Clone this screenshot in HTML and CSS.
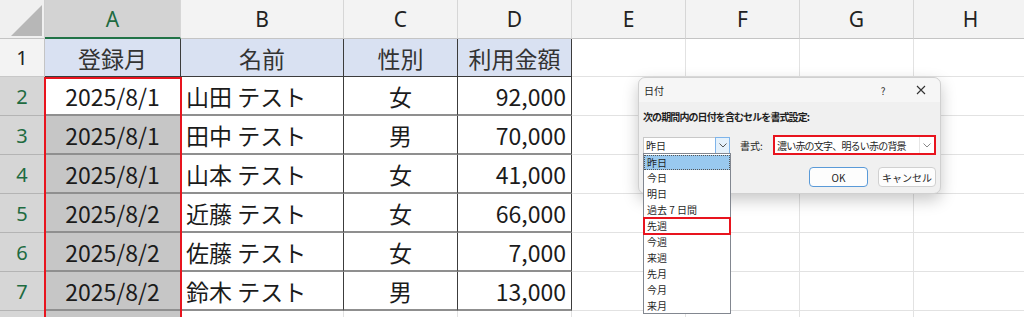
FILE: index.html
```html
<!DOCTYPE html>
<html lang="ja">
<head>
    <meta charset="UTF-8">
    <title>条件付き書式 - 日付</title>
    <link rel="stylesheet" href="styles.css">
</head>
<body>
    <div class="sheet">
        <div class="corner">
            <svg width="44" height="39" viewBox="0 0 44 39"><polygon points="11,36 42,36 42,5" fill="#b7b7b7"/></svg>
        </div>
        <div class="col sel">A</div>
        <div class="col">B</div>
        <div class="col">C</div>
        <div class="col">D</div>
        <div class="col">E</div>
        <div class="col">F</div>
        <div class="col">G</div>
        <div class="col">H</div>

        <div class="rh">1</div>
        <div class="c t th">登録月</div>
        <div class="c t th">名前</div>
        <div class="c t th">性別</div>
        <div class="c t th">利用金額</div>
        <div class="c"></div><div class="c"></div><div class="c"></div><div class="c"></div>

        <div class="rh sel">2</div>
        <div class="c t mid">2025/8/1</div>
        <div class="c t name">山田 テスト</div>
        <div class="c t mid">女</div>
        <div class="c t num">92,000</div>
        <div class="c"></div><div class="c"></div><div class="c"></div><div class="c"></div>

        <div class="rh sel">3</div>
        <div class="c t mid picked">2025/8/1</div>
        <div class="c t name">田中 テスト</div>
        <div class="c t mid">男</div>
        <div class="c t num">70,000</div>
        <div class="c"></div><div class="c"></div><div class="c"></div><div class="c"></div>

        <div class="rh sel">4</div>
        <div class="c t mid picked">2025/8/1</div>
        <div class="c t name">山本 テスト</div>
        <div class="c t mid">女</div>
        <div class="c t num">41,000</div>
        <div class="c"></div><div class="c"></div><div class="c"></div><div class="c"></div>

        <div class="rh sel">5</div>
        <div class="c t mid picked">2025/8/2</div>
        <div class="c t name">近藤 テスト</div>
        <div class="c t mid">女</div>
        <div class="c t num">66,000</div>
        <div class="c"></div><div class="c"></div><div class="c"></div><div class="c"></div>

        <div class="rh sel">6</div>
        <div class="c t mid picked">2025/8/2</div>
        <div class="c t name">佐藤 テスト</div>
        <div class="c t mid">女</div>
        <div class="c t num">7,000</div>
        <div class="c"></div><div class="c"></div><div class="c"></div><div class="c"></div>

        <div class="rh sel">7</div>
        <div class="c t mid picked">2025/8/2</div>
        <div class="c t name">鈴木 テスト</div>
        <div class="c t mid">男</div>
        <div class="c t num">13,000</div>
        <div class="c"></div><div class="c"></div><div class="c"></div><div class="c"></div>

        <div class="rh sel"></div>
        <div class="c picked"></div>
        <div class="c"></div><div class="c"></div><div class="c"></div>
        <div class="c"></div><div class="c"></div><div class="c"></div><div class="c"></div>

        <div class="mark-col"></div>

        <div class="dialog">
            <div class="titlebar">
                <span class="title">日付</span>
                <span class="help">?</span>
                <svg class="close" width="10" height="10" viewBox="0 0 10 10"><path d="M1 1L9 9M9 1L1 9" stroke="#333" stroke-width="1.1"/></svg>
            </div>
            <div class="dlg-body">
                <div class="prompt">次の期間内の日付を含むセルを書式設定:</div>
                <div class="controls">
                    <div class="combo">
                        <span class="combo-text">昨日</span>
                        <span class="combo-btn">
                            <svg width="8" height="5" viewBox="0 0 8 5"><path d="M0.5 0.5L4 4L7.5 0.5" fill="none" stroke="#555" stroke-width="1"/></svg>
                        </span>
                        <ul class="droplist">
                            <li class="current">昨日</li>
                            <li>今日</li>
                            <li>明日</li>
                            <li>過去 7 日間</li>
                            <li class="marked">先週</li>
                            <li>今週</li>
                            <li>来週</li>
                            <li>先月</li>
                            <li>今月</li>
                            <li>来月</li>
                        </ul>
                    </div>
                    <span class="fmt-label">書式:</span>
                    <div class="fmt-combo">
                        <span class="fmt-text">濃い赤の文字、明るい赤の背景</span>
                        <span class="fmt-btn">
                            <svg width="8" height="5" viewBox="0 0 8 5"><path d="M0.5 0.5L4 4L7.5 0.5" fill="none" stroke="#888" stroke-width="1"/></svg>
                        </span>
                    </div>
                </div>
                <div class="buttons">
                    <button class="btn primary">OK</button>
                    <button class="btn">キャンセル</button>
                </div>
            </div>
        </div>
    </div>
</body>
</html>
```

FILE: styles.css
```css
*{
    box-sizing: border-box;
}
body{
    margin: 0;
    background-color: #fff;
    font-family: "Noto Sans CJK JP", "Noto Sans", sans-serif;
    color: #1b1b1b;
    overflow: hidden;
}
div.sheet{
    position: relative;
    display: grid;
    grid-template-columns: 45px 136px 163px 114px 114px 114px 114px 114px 114px;
    grid-template-rows: 39px 38px repeat(7, 39px);
    width: 1024px;
    height: 317px;
    overflow: hidden;
}
div.corner{
    background-color: #f0f0f0;
    border-right: 1px solid #cfcfcf;
    border-bottom: 1px solid #c4c4c4;
}
div.corner svg{
    display: block;
}
div.col{
    display: flex;
    justify-content: center;
    align-items: center;
    background-color: #f3f3f3;
    border-right: 1px solid #d6d6d6;
    border-bottom: 1px solid #c4c4c4;
    font-family: "Noto Sans", sans-serif;
    font-size: 21px;
    color: #222;
}
div.col.sel{
    background-color: #d3d3d3;
    color: #1e6b41;
    border-bottom: 2px solid #217346;
}
div.rh{
    display: flex;
    justify-content: center;
    align-items: center;
    background-color: #f3f3f3;
    border-right: 1px solid #c4c4c4;
    border-bottom: 1px solid #c8c8c8;
    font-family: "Noto Sans", sans-serif;
    font-size: 20px;
    color: #222;
}
div.rh.sel{
    background-color: #d6d6d6;
    color: #1e6b41;
    border-bottom: 1px solid #b4b4b4;
}
div.c{
    display: flex;
    align-items: center;
    padding: 0 5px;
    font-size: 23px;
    white-space: nowrap;
    border-right: 1px solid #e2e2e2;
    border-bottom: 1px solid #e2e2e2;
}
div.c.t{
    border-right: 1px solid #3c3c3c;
    border-bottom: 2px solid #8f8f8f;
}
div.c.th{
    justify-content: center;
    background-color: #d9e1f2;
    border-bottom: 1px solid #3c3c3c;
    color: #333;
}
div.c.mid{
    justify-content: center;
}
div.c.num{
    justify-content: flex-end;
}
div.c.picked{
    background-color: #c6c6c6;
}
div.mark-col{
    position: absolute;
    left: 44px;
    top: 77px;
    width: 138px;
    height: 260px;
    border: 2px solid #e8141e;
    pointer-events: none;
}

/* dialog */
div.dialog{
    position: absolute;
    left: 638px;
    top: 77px;
    width: 303px;
    height: 117px;
    background-color: #f0f0f0;
    border: 1px solid #d0d0d0;
    border-radius: 7px;
    box-shadow: 0 6px 16px rgba(0,0,0,0.22);
    font-size: 10px;
    color: #1f1f1f;
}
div.titlebar{
    display: flex;
    align-items: center;
    height: 24px;
    padding: 0 0 0 5px;
    background-color: #f6f6f6;
    border-radius: 7px 7px 0 0;
}
span.title{
    flex: 1;
}
span.help{
    width: 12px;
    margin-right: 27px;
    text-align: center;
    color: #333;
}
svg.close{
    margin-right: 14px;
}
div.dlg-body{
    padding: 0 4px 0 4px;
}
div.prompt{
    font-weight: bold;
    margin-top: 8px;
    line-height: 14px;
    letter-spacing: -0.9px;
}
div.controls{
    display: flex;
    align-items: center;
    height: 20px;
    margin-top: 11px;
}
div.combo{
    position: relative;
    display: flex;
    width: 87px;
    height: 17px;
    background-color: #fff;
    border: 1px solid #c8c8c8;
    border-right: none;
}
span.combo-text{
    flex: 1;
    padding-left: 2px;
    line-height: 15px;
}
span.combo-btn{
    display: flex;
    justify-content: center;
    align-items: center;
    width: 15px;
    height: 17px;
    margin-top: -1px;
    background-color: #e5f1fb;
    border: 1px solid #7eb4ea;
}
ul.droplist{
    position: absolute;
    left: -1px;
    top: 15px;
    width: 88px;
    margin: 0;
    padding: 1px 0 0 0;
    list-style: none;
    background-color: #fff;
    border: 1px solid #828790;
}
ul.droplist li{
    height: 15.9px;
    line-height: 15.9px;
    padding-left: 3px;
    white-space: nowrap;
}
ul.droplist li.current{
    background-color: #99c9ef;
    outline: 1px dotted #555;
    outline-offset: -1px;
}
ul.droplist li.marked{
    outline: 2px solid #e8141e;
    outline-offset: -1px;
}
span.fmt-label{
    margin-left: 10px;
    width: 33px;
}
div.fmt-combo{
    display: flex;
    align-items: center;
    width: 163px;
    height: 20px;
    background-color: #fff;
    border: 2px solid #e8141e;
}
span.fmt-text{
    flex: 1;
    padding-left: 2px;
    white-space: nowrap;
    letter-spacing: -0.8px;
}
span.fmt-btn{
    display: flex;
    justify-content: center;
    align-items: center;
    width: 15px;
    height: 100%;
    border-left: 1px solid #e6e6e6;
}
div.buttons{
    display: flex;
    justify-content: flex-end;
    gap: 10px;
    margin-top: 12px;
}
button.btn{
    width: 58px;
    height: 20px;
    padding: 0;
    font-family: "Noto Sans CJK JP", sans-serif;
    font-size: 10px;
    color: #1f1f1f;
    background-color: #fdfdfd;
    border: 1px solid #d0d0d0;
    border-radius: 4px;
}
button.btn.primary{
    width: 59px;
    border-color: #5a9ad8;
}
```
